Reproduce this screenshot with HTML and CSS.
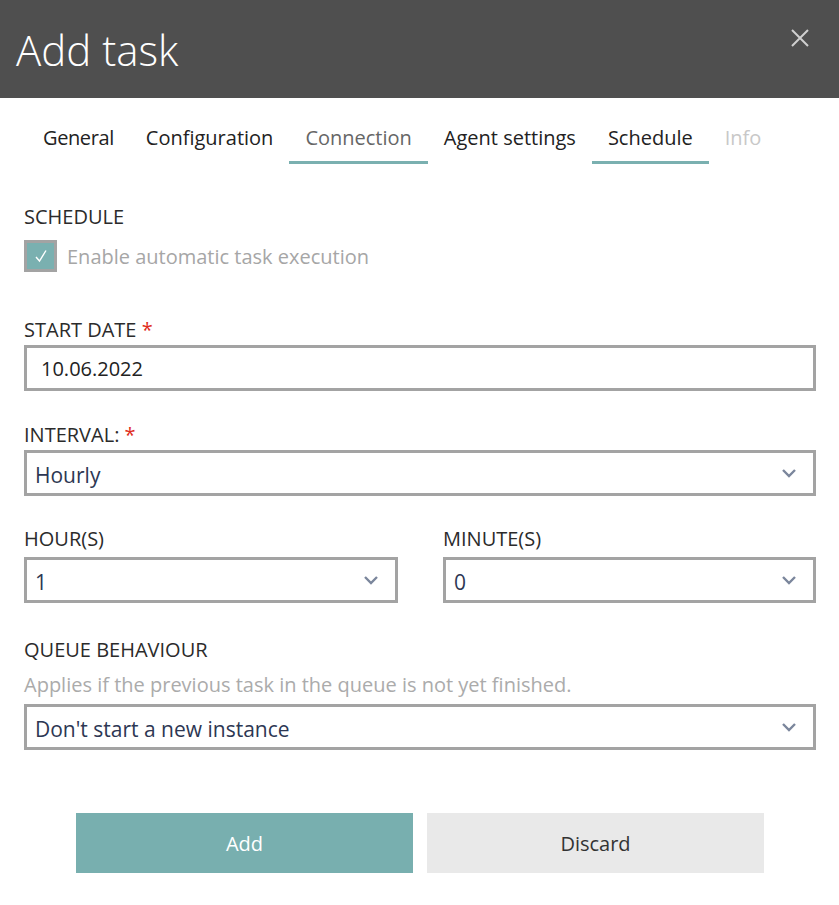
FILE: index.html
```html
<!DOCTYPE html>
<html>
<head>
<meta charset="utf-8">
<link rel="stylesheet" href="styles.css">
</head>
<body>
<div class="dialog">
  <header class="header">
    <h1 class="title">Add task</h1>
    <button class="close" aria-label="Close">
      <svg width="20" height="20" viewBox="0 0 20 20"><path d="M2 2 L18 18 M18 2 L2 18" stroke="#d0d0d0" stroke-width="2" fill="none"/></svg>
    </button>
  </header>
  <nav class="tabs">
    <span class="tab">General</span>
    <span class="tab">Configuration</span>
    <span class="tab tab-visited">Connection</span>
    <span class="tab">Agent settings</span>
    <span class="tab tab-active">Schedule</span>
    <span class="tab tab-disabled">Info</span>
  </nav>
  <main class="body">
    <section class="group g-schedule">
      <div class="label">SCHEDULE</div>
      <label class="check">
        <span class="box">
          <svg width="14" height="14" viewBox="0 0 14 14"><path d="M2 8 L5.5 12 L12 1.5" stroke="#fff" stroke-width="1.4" fill="none"/></svg>
        </span>
        <span class="check-text">Enable automatic task execution</span>
      </label>
    </section>

    <section class="group g-date">
      <div class="label">START DATE <span class="req">*</span></div>
      <div class="input input-date">10.06.2022</div>
    </section>

    <section class="group g-interval">
      <div class="label">INTERVAL: <span class="req">*</span></div>
      <div class="input select">Hourly<svg class="chev" width="16" height="10" viewBox="0 0 16 10"><path d="M2 2 L8 8 L14 2" stroke="#7b869c" stroke-width="2.4" fill="none"/></svg></div>
    </section>

    <section class="row">
      <div class="group">
        <div class="label">HOUR(S)</div>
        <div class="input select">1<svg class="chev" width="16" height="10" viewBox="0 0 16 10"><path d="M2 2 L8 8 L14 2" stroke="#7b869c" stroke-width="2.4" fill="none"/></svg></div>
      </div>
      <div class="group">
        <div class="label">MINUTE(S)</div>
        <div class="input select">0<svg class="chev" width="16" height="10" viewBox="0 0 16 10"><path d="M2 2 L8 8 L14 2" stroke="#7b869c" stroke-width="2.4" fill="none"/></svg></div>
      </div>
    </section>

    <section class="group g-queue">
      <div class="label">QUEUE BEHAVIOUR</div>
      <div class="hint">Applies if the previous task in the queue is not yet finished.</div>
      <div class="input select">Don't start a new instance<svg class="chev" width="16" height="10" viewBox="0 0 16 10"><path d="M2 2 L8 8 L14 2" stroke="#7b869c" stroke-width="2.4" fill="none"/></svg></div>
    </section>

    <div class="actions">
      <button class="btn btn-primary">Add</button>
      <button class="btn btn-secondary">Discard</button>
    </div>
  </main>
</div>
</body>
</html>
```
FILE: styles.css
```css
* { box-sizing: border-box; }
html, body { margin: 0; padding: 0; background: #fff; }
body {
  font-family: "Open Sans", "Noto Sans", sans-serif;
  color: #333;
  width: 839px;
  height: 905px;
  overflow: hidden;
}
.header {
  height: 98px;
  background: #4f4f4f;
  display: flex;
  align-items: flex-start;
  justify-content: space-between;
  padding: 0 29px 0 16px;
}
.title {
  margin: 22px 0 0 0;
  font-weight: 300;
  font-size: 42px;
  line-height: 56px;
  color: #fff;
}
.close {
  margin-top: 28px;
  background: none;
  border: none;
  padding: 0;
  width: 20px;
  height: 20px;
  display: flex;
}
.tabs {
  display: flex;
  padding: 0 0 0 27px;
  margin-top: 20px;
  height: 46px;
}
.tab {
  font-size: 20px;
  color: #222;
  padding: 0 16px;
  line-height: 40px;
  height: 46px;
  border-bottom: 3px solid transparent;
}
.tab:first-child { letter-spacing: -0.4px; }
.tab-visited { color: #666; border-bottom-color: #7ab0b0; }
.tab-active { color: #222; border-bottom-color: #7ab0b0; }
.tab-disabled { color: #c8c8c8; }
.body {
  padding: 0 23px 0 24px;
  display: flex;
  flex-direction: column;
}
.group { display: flex; flex-direction: column; }
.label {
  font-size: 20px;
  line-height: 24px;
  color: #2b2b2b;
  margin-bottom: 3px;
}
.g-schedule { margin-top: 41px; }
.g-schedule .label { margin-bottom: 11px; }
.req { color: #e02b20; }
.check { display: flex; align-items: center; gap: 10px; }
.box {
  width: 33px;
  height: 32px;
  background: #7ab0b0;
  border: 3px solid #a3a3a3;
  display: flex;
  align-items: center;
  justify-content: center;
}
.check-text { font-size: 20px; color: #a6a6a6; }
.g-date { margin-top: 46px; }
.g-interval { margin-top: 32px; }
.input {
  height: 46px;
  border: 3px solid #a3a3a3;
  display: flex;
  align-items: center;
  font-size: 20px;
  padding: 1px 0 0 14px;
  color: #222;
}
.select {
  font-size: 21px;
  padding: 3px 16px 0 8px;
  color: #2d3753;
  justify-content: space-between;
}
.chev { flex: none; margin-top: -4px; }
.row {
  display: grid;
  grid-template-columns: 374px 373px;
  justify-content: space-between;
  margin-top: 31px;
}
.row .label { margin-bottom: 6px; }
.g-queue { margin-top: 35px; }
.g-queue .label { margin-bottom: 11px; }
.hint { font-size: 20px; color: #ababab; line-height: 24px; margin-bottom: 7px; }
.actions {
  display: flex;
  gap: 14px;
  margin: 63px 0 0 52px;
}
.btn {
  width: 337px;
  height: 60px;
  border: none;
  font-family: inherit;
  font-size: 20px;
  padding: 0;
}
.btn-primary { background: #78afaf; color: #fff; }
.btn-secondary { background: #e9e9e9; color: #333; }
```
